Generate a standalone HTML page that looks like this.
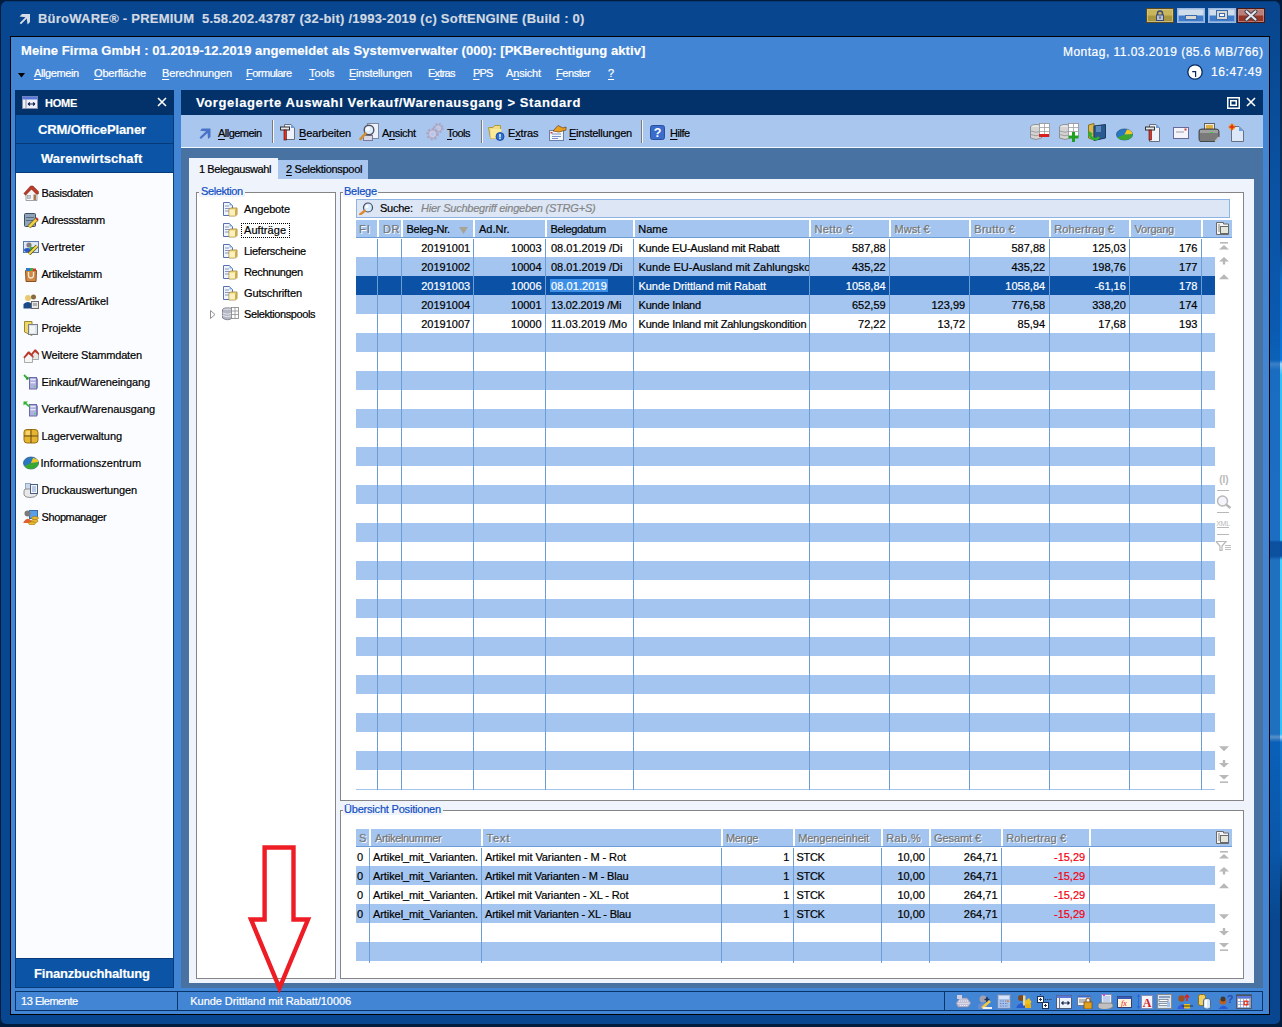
<!DOCTYPE html>
<html><head><meta charset="utf-8"><style>
html,body{margin:0;padding:0;width:1282px;height:1027px;overflow:hidden;position:relative;background:#08488f;font-family:"Liberation Sans",sans-serif;}
body>div,body>span,body>svg{position:absolute;}
u{text-decoration:underline;text-underline-offset:2px;text-decoration-thickness:1px;}
</style></head><body>
<div style="left:0px;top:0px;width:1282px;height:1027px;background:#021c3e;"></div>
<div style="left:1px;top:1px;width:1279px;height:1023px;background:#08478f;border-radius:6px 6px 5px 5px;"></div>
<div style="left:6px;top:1px;width:1270px;height:1px;background:#063a78;"></div>
<div style="left:1270px;top:20px;width:10px;height:960px;background:linear-gradient(to bottom, #08478f 0px, #0a52a4 180px, #0a5ab0 310px, #0c62b8 340px, #3a80c8 344px, #1a6cc0 350px, #1d6ec2 520px, #0c50a0 522px, #0c50a0 536px, #2070c0 540px, #2070c0 714px, #5a90c8 717px, #0a60b8 722px, #0a56a8 830px, #08478f 900px);"></div>
<div style="left:1280px;top:20px;width:2px;height:960px;background:linear-gradient(to bottom, #031f40 0px, #0a3a70 220px, #0a6cc8 260px, #0a78e0 340px, #a0d8ff 344px, #30c0f8 355px, #30c8f8 520px, #0a50a0 522px, #0a50a0 536px, #40d0ff 540px, #30c0f8 714px, #a0d8ff 717px, #1078d0 722px, #0a60b0 830px, #031f40 880px);"></div>
<div style="left:10px;top:36px;width:1260px;height:979px;box-sizing:border-box;border:1px solid #000;background:#4385d5;"></div>
<div style="left:15px;top:90px;width:159px;height:25px;background:#03326a;"></div>
<div style="left:15px;top:115px;width:159px;height:29px;background:#063a78;"></div>
<div style="left:16px;top:115px;width:157px;height:28px;background:#0c54a5;"></div>
<div style="left:15px;top:144px;width:159px;height:29px;background:#063a78;"></div>
<div style="left:16px;top:144px;width:157px;height:28px;background:#0c54a5;"></div>
<div style="left:15px;top:173px;width:159px;height:785px;background:#0a3f7c;"></div>
<div style="left:16px;top:173px;width:157px;height:785px;background:#fbfcff;"></div>
<div style="left:15px;top:958px;width:159px;height:30px;background:#063a78;"></div>
<div style="left:16px;top:959px;width:157px;height:28px;background:#0c54a5;"></div>
<div style="left:15px;top:991px;width:1248px;height:20px;box-sizing:border-box;border:1px solid #073469;background:#4385d5;"></div>
<div style="left:177px;top:992px;width:1px;height:18px;background:#073469;"></div>
<div style="left:944px;top:992px;width:1px;height:18px;background:#073469;"></div>
<div style="left:181px;top:90px;width:1082px;height:25px;background:#03326a;"></div>
<div style="left:181px;top:115px;width:1082px;height:32px;background:#a9c6ee;"></div>
<div style="left:181px;top:147px;width:1082px;height:1px;background:#f4f8fe;"></div>
<div style="left:181px;top:148px;width:1082px;height:840px;background:#4872a1;"></div>
<div style="left:278px;top:160px;width:90px;height:19px;background:#a9c6ee;"></div>
<div style="left:189px;top:158px;width:89px;height:21px;background:#eff4fc;"></div>
<div style="left:189px;top:179px;width:1065px;height:804px;background:#eff4fc;"></div>
<div style="left:196px;top:192px;width:140px;height:787px;box-sizing:border-box;border:1px solid #858585;background:#fff;"></div>
<div style="left:340px;top:192px;width:904px;height:609px;box-sizing:border-box;border:1px solid #858585;background:#fff;"></div>
<div style="left:340px;top:810px;width:904px;height:169px;box-sizing:border-box;border:1px solid #858585;background:#fff;"></div>
<div style="left:199px;top:186px;width:46px;height:11px;background:#eff4fc;"></div>
<div style="left:343px;top:186px;width:35px;height:11px;background:#eff4fc;"></div>
<div style="left:343px;top:804px;width:100px;height:11px;background:#eff4fc;"></div>
<div style="left:356px;top:199px;width:874px;height:19px;box-sizing:border-box;border:1px solid #8db2e4;background:#dce6f5;"></div>
<div style="left:356px;top:220px;width:21px;height:17px;background:#a4c5ef;"></div>
<div style="left:379px;top:220px;width:22px;height:17px;background:#a4c5ef;"></div>
<div style="left:403px;top:220px;width:70px;height:17px;background:#a4c5ef;"></div>
<div style="left:475px;top:220px;width:70px;height:17px;background:#a4c5ef;"></div>
<div style="left:547px;top:220px;width:86px;height:17px;background:#a4c5ef;"></div>
<div style="left:635px;top:220px;width:174px;height:17px;background:#a4c5ef;"></div>
<div style="left:811px;top:220px;width:78px;height:17px;background:#a4c5ef;"></div>
<div style="left:891px;top:220px;width:78px;height:17px;background:#a4c5ef;"></div>
<div style="left:971px;top:220px;width:78px;height:17px;background:#a4c5ef;"></div>
<div style="left:1051px;top:220px;width:78px;height:17px;background:#a4c5ef;"></div>
<div style="left:1131px;top:220px;width:70px;height:17px;background:#a4c5ef;"></div>
<div style="left:1203px;top:220px;width:29px;height:17px;background:#a4c5ef;"></div>
<div style="left:356px;top:237px;width:876px;height:1px;background:#6d9dd6;"></div>
<div style="left:356px;top:257px;width:859px;height:19px;background:#a4c5ef;"></div>
<div style="left:356px;top:276px;width:859px;height:19px;background:#0b51a5;"></div>
<div style="left:356px;top:295px;width:859px;height:19px;background:#a4c5ef;"></div>
<div style="left:356px;top:333px;width:859px;height:19px;background:#a4c5ef;"></div>
<div style="left:356px;top:371px;width:859px;height:19px;background:#a4c5ef;"></div>
<div style="left:356px;top:409px;width:859px;height:19px;background:#a4c5ef;"></div>
<div style="left:356px;top:447px;width:859px;height:19px;background:#a4c5ef;"></div>
<div style="left:356px;top:485px;width:859px;height:19px;background:#a4c5ef;"></div>
<div style="left:356px;top:523px;width:859px;height:19px;background:#a4c5ef;"></div>
<div style="left:356px;top:561px;width:859px;height:19px;background:#a4c5ef;"></div>
<div style="left:356px;top:599px;width:859px;height:19px;background:#a4c5ef;"></div>
<div style="left:356px;top:637px;width:859px;height:19px;background:#a4c5ef;"></div>
<div style="left:356px;top:675px;width:859px;height:19px;background:#a4c5ef;"></div>
<div style="left:356px;top:713px;width:859px;height:19px;background:#a4c5ef;"></div>
<div style="left:356px;top:751px;width:859px;height:19px;background:#a4c5ef;"></div>
<div style="left:356px;top:789px;width:859px;height:1px;background:#a4c5ef;"></div>
<div style="left:377px;top:239px;width:1px;height:551px;background:#6d9dd6;"></div>
<div style="left:401px;top:239px;width:1px;height:551px;background:#6d9dd6;"></div>
<div style="left:473px;top:239px;width:1px;height:551px;background:#6d9dd6;"></div>
<div style="left:545px;top:239px;width:1px;height:551px;background:#6d9dd6;"></div>
<div style="left:633px;top:239px;width:1px;height:551px;background:#6d9dd6;"></div>
<div style="left:809px;top:239px;width:1px;height:551px;background:#6d9dd6;"></div>
<div style="left:889px;top:239px;width:1px;height:551px;background:#6d9dd6;"></div>
<div style="left:969px;top:239px;width:1px;height:551px;background:#6d9dd6;"></div>
<div style="left:1049px;top:239px;width:1px;height:551px;background:#6d9dd6;"></div>
<div style="left:1129px;top:239px;width:1px;height:551px;background:#6d9dd6;"></div>
<div style="left:1201px;top:239px;width:1px;height:551px;background:#6d9dd6;"></div>
<div style="left:550px;top:279px;width:58px;height:13px;background:#3d8ee6;"></div>
<div style="left:356px;top:829px;width:13px;height:17px;background:#a4c5ef;"></div>
<div style="left:371px;top:829px;width:110px;height:17px;background:#a4c5ef;"></div>
<div style="left:483px;top:829px;width:238px;height:17px;background:#a4c5ef;"></div>
<div style="left:723px;top:829px;width:70px;height:17px;background:#a4c5ef;"></div>
<div style="left:795px;top:829px;width:86px;height:17px;background:#a4c5ef;"></div>
<div style="left:883px;top:829px;width:46px;height:17px;background:#a4c5ef;"></div>
<div style="left:931px;top:829px;width:70px;height:17px;background:#a4c5ef;"></div>
<div style="left:1003px;top:829px;width:86px;height:17px;background:#a4c5ef;"></div>
<div style="left:1091px;top:829px;width:141px;height:17px;background:#a4c5ef;"></div>
<div style="left:356px;top:846px;width:876px;height:1px;background:#6d9dd6;"></div>
<div style="left:356px;top:866px;width:859px;height:19px;background:#a4c5ef;"></div>
<div style="left:356px;top:904px;width:859px;height:19px;background:#a4c5ef;"></div>
<div style="left:356px;top:942px;width:859px;height:19px;background:#a4c5ef;"></div>
<div style="left:369px;top:848px;width:1px;height:115px;background:#6d9dd6;"></div>
<div style="left:481px;top:848px;width:1px;height:115px;background:#6d9dd6;"></div>
<div style="left:721px;top:848px;width:1px;height:115px;background:#6d9dd6;"></div>
<div style="left:793px;top:848px;width:1px;height:115px;background:#6d9dd6;"></div>
<div style="left:881px;top:848px;width:1px;height:115px;background:#6d9dd6;"></div>
<div style="left:929px;top:848px;width:1px;height:115px;background:#6d9dd6;"></div>
<div style="left:1001px;top:848px;width:1px;height:115px;background:#6d9dd6;"></div>
<div style="left:1089px;top:848px;width:1px;height:115px;background:#6d9dd6;"></div>
<svg style="left:19px;top:13px" width="12" height="12" viewBox="0 0 12 12"><path d="M3 1 H11 V9 L8.5 11.5 L7.8 5.5 L2 11.3 L0.7 10 L6.5 4.2 L0.5 3.5 Z" fill="#d6dce6"/></svg>
<svg style="left:1146px;top:8px" width="28" height="15" viewBox="0 0 28 15"><rect x="0.5" y="0.5" width="27" height="14" fill="#a8963f" stroke="#5d4b1c"/><rect x="1.5" y="1.5" width="25" height="6" fill="#c9b65c"/><rect x="1.5" y="1.5" width="25" height="12" fill="none" stroke="rgba(255,255,255,0.35)"/><path d="M11.5 7 V5.5 a2.5 2.5 0 0 1 5 0 V7" fill="none" stroke="#3a4a7a" stroke-width="1.5"/><rect x="10.5" y="7" width="7" height="5.5" fill="#b8c0d0" stroke="#3a4a7a"/><rect x="13.5" y="8.5" width="1" height="2" fill="#223"/></svg>
<svg style="left:1177px;top:8px" width="28" height="15" viewBox="0 0 28 15"><rect x="0.5" y="0.5" width="27" height="14" fill="#3f7bc8" stroke="#9ab8e0"/><rect x="1.5" y="1.5" width="25" height="6" fill="#cfdcea"/><rect x="1.5" y="1.5" width="25" height="12" fill="none" stroke="rgba(255,255,255,0.35)"/><rect x="8.5" y="7.5" width="11" height="4" fill="#d8d8d0" stroke="#3a6ab0" stroke-width="1"/></svg>
<svg style="left:1208px;top:8px" width="28" height="15" viewBox="0 0 28 15"><rect x="0.5" y="0.5" width="27" height="14" fill="#3f7bc8" stroke="#9ab8e0"/><rect x="1.5" y="1.5" width="25" height="6" fill="#cfdcea"/><rect x="1.5" y="1.5" width="25" height="12" fill="none" stroke="rgba(255,255,255,0.35)"/><rect x="8.5" y="2.5" width="11" height="9" fill="#d8d8d0" stroke="#3a6ab0"/><rect x="11.5" y="5.5" width="5" height="3" fill="#fff" stroke="#3a6ab0"/></svg>
<svg style="left:1237px;top:8px" width="28" height="15" viewBox="0 0 28 15"><rect x="0.5" y="0.5" width="27" height="14" fill="#983424" stroke="#4a1810"/><rect x="1.5" y="1.5" width="25" height="6" fill="#b88078"/><rect x="1.5" y="1.5" width="25" height="12" fill="none" stroke="rgba(255,255,255,0.35)"/><path d="M9.5 3.5 L18.5 11.5 M18.5 3.5 L9.5 11.5" stroke="#3a3a4a" stroke-width="4" stroke-linecap="round"/><path d="M9.5 3.5 L18.5 11.5 M18.5 3.5 L9.5 11.5" stroke="#e6e6ea" stroke-width="2.2" stroke-linecap="round"/></svg>
<svg style="left:18px;top:73px" width="7" height="5" viewBox="0 0 7 5"><path d="M0 0 H7 L3.5 4.5 Z" fill="#000"/></svg>
<svg style="left:1187px;top:64px" width="16" height="16" viewBox="0 0 16 16"><circle cx="8" cy="8" r="7.2" fill="#fff" stroke="#062a5c" stroke-width="1.3"/><path d="M5.2 7.6 H8.6 V13" fill="none" stroke="#062a5c" stroke-width="1.2"/></svg>
<svg style="left:22px;top:96px" width="16" height="13" viewBox="0 0 16 13"><rect x="0.5" y="0.5" width="15" height="12" fill="#eef0fa" stroke="#8890b0"/><rect x="0.5" y="0.5" width="15" height="3" fill="#5a78d8"/><rect x="3.5" y="3" width="1" height="10" fill="#8890b0"/><path d="M6 8 H13 M6 8 l2 -1.5 M6 8 l2 1.5 M13 8 l-2 -1.5 M13 8 l-2 1.5" stroke="#1a2a50" stroke-width="1.1" fill="none"/></svg>
<svg style="left:157px;top:97px" width="10" height="10" viewBox="0 0 10 10"><path d="M1 1 L9 9 M9 1 L1 9" stroke="#fff" stroke-width="1.6"/></svg>
<svg style="left:1227px;top:97px" width="13" height="12" viewBox="0 0 13 12"><rect x="0.75" y="0.75" width="11.5" height="10.5" fill="none" stroke="#fff" stroke-width="1.5"/><rect x="3.75" y="3.75" width="5.5" height="4.5" fill="none" stroke="#fff" stroke-width="1.5"/></svg>
<svg style="left:1246px;top:97px" width="10" height="10" viewBox="0 0 10 10"><path d="M1 1 L9 9 M9 1 L1 9" stroke="#fff" stroke-width="1.6"/></svg>
<svg style="left:23px;top:185px" width="16" height="16" viewBox="0 0 16 16"><path d="M3 8 L8.5 3.5 L14 8 V15.5 H3 Z" fill="#f6f6f6" stroke="#8a8a8a" stroke-width="0.8"/><path d="M0.8 8.5 L7.5 1 H10 L15.5 6.5 V8.8 L13.5 9.2 L8.5 4.2 L2.5 10.2 Z" fill="#bb3a2a" stroke="#7a2414" stroke-width="0.5"/><rect x="10.5" y="9.5" width="2.5" height="5.5" fill="#a87850"/><rect x="4.5" y="10.5" width="3" height="3" fill="#c0ccd8" stroke="#8a8a8a" stroke-width="0.5"/></svg>
<svg style="left:23px;top:212px" width="16" height="16" viewBox="0 0 16 16"><rect x="1.5" y="1.5" width="11" height="13" rx="1" fill="#8ea4b8" stroke="#3e4e62"/><rect x="3" y="5" width="8" height="1" fill="#5a6a80"/><rect x="3" y="8" width="8" height="1" fill="#5a6a80"/><path d="M6 15 L14 7" stroke="#6a5a20" stroke-width="4"/><path d="M6 15 L14 7" stroke="#f0d040" stroke-width="2.6"/><path d="M13 6 L15 8" stroke="#c03030" stroke-width="2"/></svg>
<svg style="left:23px;top:239px" width="16" height="16" viewBox="0 0 16 16"><rect x="0.5" y="2.5" width="15" height="11" fill="#dfe8f4" stroke="#5a7aa8"/><circle cx="6" cy="6" r="2.6" fill="#808080"/><ellipse cx="4.5" cy="11" rx="3.5" ry="2" fill="#2a5ac8"/><rect x="7" y="8" width="4" height="3" fill="#3ab03a"/><path d="M6 15 L14 7" stroke="#5a5020" stroke-width="3.6"/><path d="M6 15 L14 7" stroke="#f0d848" stroke-width="2.2"/></svg>
<svg style="left:23px;top:266px" width="16" height="16" viewBox="0 0 16 16"><path d="M2.5 4.5 H13.5 L13 15.5 H3 Z" fill="#cf8845" stroke="#8a5020"/><rect x="3" y="2" width="4" height="3" fill="#2a7ad0"/><rect x="7" y="2" width="3" height="3" fill="#3ab040"/><rect x="10" y="2.5" width="3" height="2.5" fill="#d83030"/><path d="M5.5 6 V9.5 a2.5 2.5 0 0 0 5 0 V6" fill="none" stroke="#f4e8d8" stroke-width="1.3"/></svg>
<svg style="left:23px;top:293px" width="16" height="16" viewBox="0 0 16 16"><circle cx="5" cy="5" r="3" fill="#e8c870"/><path d="M0.5 15.5 V11 Q5 7 9 11 V15.5 Z" fill="#1a4a88"/><circle cx="10.5" cy="4" r="2.5" fill="#8a6a40"/><rect x="8.5" y="8.5" width="7" height="7" fill="#e8e8e8" stroke="#6a6a6a"/><rect x="10" y="10" width="4" height="3" fill="#b0b0b0"/></svg>
<svg style="left:23px;top:320px" width="16" height="16" viewBox="0 0 16 16"><path d="M1.5 1.5 H9 V15.5 L1.5 12 Z" fill="#f0d868" stroke="#9a8a30"/><rect x="5.5" y="4.5" width="9" height="10" fill="#dde2e8" stroke="#7a8088"/><rect x="7" y="6" width="5" height="7" fill="#f2f4f6"/></svg>
<svg style="left:23px;top:347px" width="16" height="16" viewBox="0 0 16 16"><path d="M8.5 7 L12 4 L15.5 7 V12.5 H8.5 Z" fill="#e8e8e8" stroke="#8a8a8a" stroke-width="0.7"/><path d="M7.8 7.2 L11.5 2.5 H13 L16 6 V8 L12 5 L9 8.5 Z" fill="#bb3a2a"/><path d="M1.5 10 L5.5 6.5 L9.5 10 V15.5 H1.5 Z" fill="#f4f4f4" stroke="#8a8a8a" stroke-width="0.7"/><path d="M0.3 10.3 L5 4.5 H6.5 L10.5 9 V11 L5.8 7 L1.5 11.5 Z" fill="#bb3a2a"/></svg>
<svg style="left:23px;top:374px" width="16" height="16" viewBox="0 0 16 16"><rect x="6.5" y="3.5" width="7" height="11.5" fill="#aeb0e0" stroke="#6a6aa8"/><rect x="13.5" y="4.5" width="1.5" height="10" fill="#8a8ac0"/><rect x="7.5" y="5" width="5" height="1.3" fill="#e8e8f8"/><rect x="7.5" y="8" width="5" height="1.3" fill="#e8e8f8"/><rect x="11" y="12" width="1.2" height="1.2" fill="#40e040"/><path d="M1 1 L5 5" stroke="#30b030" stroke-width="1.8"/><path d="M2.5 5.5 H5.5 V2.5 Z" fill="#208820"/></svg>
<svg style="left:23px;top:401px" width="16" height="16" viewBox="0 0 16 16"><rect x="6.5" y="3.5" width="7" height="11.5" fill="#aeb0e0" stroke="#6a6aa8"/><rect x="13.5" y="4.5" width="1.5" height="10" fill="#8a8ac0"/><rect x="7.5" y="5" width="5" height="1.3" fill="#e8e8f8"/><rect x="7.5" y="8" width="5" height="1.3" fill="#e8e8f8"/><rect x="11" y="12" width="1.2" height="1.2" fill="#40e040"/><path d="M2 2 L6.5 5.5" stroke="#40c040" stroke-width="1.8"/><path d="M0.5 0.5 H5 L0.5 4.5 Z" fill="#30b030"/></svg>
<svg style="left:23px;top:428px" width="16" height="16" viewBox="0 0 16 16"><path d="M1 4 Q1 1.5 4 1.5 H12 Q15 1.5 15 4.5 V12 Q15 15 12 15 H4 Q1 15 1 12 Z" fill="#e4b432" stroke="#9a7010"/><path d="M1 8 H15 M8 1.5 V15" stroke="#5a4010" stroke-width="0.9"/><path d="M3 3 H7 V7 H3Z" fill="#f4d470"/></svg>
<svg style="left:23px;top:455px" width="16" height="16" viewBox="0 0 16 16"><ellipse cx="8" cy="8" rx="7.5" ry="6" fill="#2a78c0" stroke="#1a4a80" stroke-width="0.7"/><path d="M8 8 L15.5 7 Q15.5 13.5 8 14 Q2.5 14 1.5 11 Z" fill="#3aa830"/><path d="M8 8 L10 3 Q15 3.5 15.5 7 Z" fill="#f0c820"/></svg>
<svg style="left:23px;top:482px" width="16" height="16" viewBox="0 0 16 16"><rect x="2.5" y="1.5" width="5" height="6" fill="#c8d8f0" stroke="#8a9ab0" stroke-width="0.8"/><path d="M1 9 Q1 7 3 7 H12 Q14 7 14 9 V13 Q12 15.5 7 15.5 Q2 15.5 1 13 Z" fill="#e8e8e8" stroke="#7a7a7a" stroke-width="0.8"/><rect x="7.5" y="2.5" width="7" height="9" fill="#f4f6fa" stroke="#4a6080"/><path d="M9 5 H13 M9 7 H13 M9 9 H13" stroke="#6a88c0" stroke-width="0.8"/></svg>
<svg style="left:23px;top:509px" width="16" height="16" viewBox="0 0 16 16"><rect x="6.5" y="1.5" width="8" height="8" fill="#5aa0e8" stroke="#3a6ab0"/><circle cx="4.5" cy="4.5" r="3" fill="#7a7a7a"/><path d="M0.5 13 Q4.5 7 8.5 12 V14 H0.5Z" fill="#e06030"/><ellipse cx="12" cy="9" rx="3.5" ry="1.6" fill="#e8b830" stroke="#a07810" stroke-width="0.6"/><ellipse cx="11.5" cy="12" rx="3.5" ry="1.6" fill="#e8b830" stroke="#a07810" stroke-width="0.6"/><ellipse cx="9" cy="14.3" rx="3.5" ry="1.6" fill="#e8b830" stroke="#a07810" stroke-width="0.6"/></svg>
<svg style="left:199px;top:128px" width="12" height="11" viewBox="0 0 12 11"><path d="M3 0.5 H11.5 V9 L9 11 L8.5 5 L2 11 L0.5 9.5 L7 3.3 L1 2.8 Z" fill="#4a72c8"/></svg>
<div style="left:272px;top:120px;width:1px;height:23px;background:#7a7a7a;"></div>
<div style="left:273px;top:120px;width:1px;height:23px;background:#f4f6fa;"></div>
<div style="left:481px;top:120px;width:1px;height:23px;background:#7a7a7a;"></div>
<div style="left:482px;top:120px;width:1px;height:23px;background:#f4f6fa;"></div>
<div style="left:641px;top:120px;width:1px;height:23px;background:#7a7a7a;"></div>
<div style="left:642px;top:120px;width:1px;height:23px;background:#f4f6fa;"></div>
<svg style="left:280px;top:124px" width="15" height="17" viewBox="0 0 15 17"><path d="M4.5 0.5 H11 L14.5 4 V15.5 H4.5 Z" fill="#eef2fa" stroke="#6a7080"/><path d="M11 0.5 V4 H14.5" fill="#6aa0e0"/><rect x="0.5" y="3" width="9" height="3" fill="#e8e8e8" stroke="#303030"/><rect x="4" y="6" width="2.4" height="10" fill="#e83020" stroke="#401010" stroke-width="0.6"/></svg>
<svg style="left:359px;top:123px" width="21" height="18" viewBox="0 0 21 18"><rect x="8.5" y="0.5" width="11" height="15" fill="#eef2fa" stroke="#7a8aa0"/><rect x="4.5" y="12.5" width="9" height="5" fill="#d8d8e8" stroke="#7a7a9a"/><circle cx="10" cy="7" r="4.8" fill="#dfeeff" stroke="#505060" stroke-width="1.4"/><circle cx="9" cy="6" r="2" fill="#fff"/><path d="M6.5 10.5 L1.5 16" stroke="#d09030" stroke-width="2.6" stroke-linecap="round"/></svg>
<svg style="left:426px;top:123px" width="18" height="18" viewBox="0 0 18 18"><circle cx="12.3" cy="5.2" r="4.2" fill="#bdbdd8" stroke="#a8a8c8" stroke-width="2.4" stroke-dasharray="1.9 1.4"/><circle cx="12.3" cy="5.2" r="3.3" fill="#c8c8e2" stroke="#9090b0" stroke-width="0.5"/><circle cx="12.3" cy="5.2" r="1.2" fill="#a9c6ee"/><circle cx="6.5" cy="11" r="5" fill="#bdbdd8" stroke="#a8a8c8" stroke-width="2.6" stroke-dasharray="2.1 1.6"/><circle cx="6.5" cy="11" r="4" fill="#cacae4" stroke="#9090b0" stroke-width="0.5"/><circle cx="6.5" cy="11" r="1.5" fill="#a9c6ee"/></svg>
<svg style="left:488px;top:124px" width="17" height="17" viewBox="0 0 17 17"><path d="M0.5 3.5 H5 L6.5 1.5 H12.5 V14.5 H2.5 Z" fill="#f2dc80" stroke="#b09a40"/><path d="M3 5 H13.5 L12.5 14.5 H2.5 Z" fill="#f8ea9a"/><circle cx="12" cy="12.5" r="4" fill="#2a70d8" stroke="#104090" stroke-width="0.8"/><rect x="11.3" y="10" width="1.4" height="3.5" fill="#fff"/><rect x="11.3" y="14" width="1.4" height="1.2" fill="#fff"/></svg>
<svg style="left:549px;top:124px" width="18" height="17" viewBox="0 0 18 17"><rect x="0.5" y="6.5" width="14" height="10" fill="#f4f6fa" stroke="#6a80a8"/><path d="M3 10 H12 M3 12.5 H12 M3 14.5 H9" stroke="#6a88c0" stroke-width="0.9"/><rect x="1.5" y="8" width="2" height="1.5" fill="#d04040"/><path d="M4 7 L9 1.5 L14 4 L17 3 L17 6 L10 8Z" fill="#e8a020" stroke="#704010" stroke-width="0.7"/></svg>
<svg style="left:650px;top:125px" width="15" height="15" viewBox="0 0 15 15"><rect x="0.5" y="0.5" width="14" height="14" rx="2" fill="#3a6ccc" stroke="#2a50a0"/><text x="7.5" y="12.3" font-family="Liberation Sans" font-weight="bold" font-size="12.5" fill="#fff" text-anchor="middle">?</text></svg>
<svg style="left:1030px;top:123px" width="21" height="19" viewBox="0 0 21 19"><ellipse cx="6" cy="4" rx="5.5" ry="2.5" fill="#e8e8e8" stroke="#808080" stroke-width="0.8"/><path d="M0.5 4 V15 Q6 18 11.5 15 V4" fill="#d4d4d4" stroke="#808080" stroke-width="0.8"/><path d="M0.5 8 Q6 10.5 11.5 8 M0.5 11.5 Q6 14 11.5 11.5" fill="none" stroke="#909090" stroke-width="0.8"/><rect x="9.5" y="0.5" width="10" height="13" fill="#fff" stroke="#909090" stroke-width="0.8"/><path d="M9.5 4.5 H19.5 M9.5 8.5 H19.5 M14.5 0.5 V13.5" stroke="#a0a0a0" stroke-width="0.8"/><rect x="9" y="11" width="10" height="3" fill="#d82020"/></svg>
<svg style="left:1059px;top:123px" width="21" height="19" viewBox="0 0 21 19"><ellipse cx="6" cy="4" rx="5.5" ry="2.5" fill="#e8e8e8" stroke="#808080" stroke-width="0.8"/><path d="M0.5 4 V15 Q6 18 11.5 15 V4" fill="#d4d4d4" stroke="#808080" stroke-width="0.8"/><path d="M0.5 8 Q6 10.5 11.5 8 M0.5 11.5 Q6 14 11.5 11.5" fill="none" stroke="#909090" stroke-width="0.8"/><rect x="9.5" y="0.5" width="10" height="13" fill="#fff" stroke="#909090" stroke-width="0.8"/><path d="M9.5 4.5 H19.5 M9.5 8.5 H19.5 M14.5 0.5 V13.5" stroke="#a0a0a0" stroke-width="0.8"/><path d="M14.5 9 V19 M9.5 14 H19.5" stroke="#20a020" stroke-width="3"/></svg>
<svg style="left:1087px;top:123px" width="20" height="19" viewBox="0 0 20 19"><path d="M1.5 2 L7 0.5 V17 L1.5 15 Z" fill="#d8b850" stroke="#8a7020"/><path d="M7 3 L18.5 1.5 V15 L7 17.5 Z" fill="#2a5a90" stroke="#1a3a60"/><rect x="9" y="3" width="5" height="6" fill="#5a8ac0"/><path d="M3 11 A5 5 0 0 0 12 14" fill="none" stroke="#30b030" stroke-width="2.6"/><path d="M2 8 L6 11 L1 13Z" fill="#30b030"/></svg>
<svg style="left:1116px;top:128px" width="17" height="13" viewBox="0 0 17 13"><ellipse cx="8.5" cy="6.5" rx="8" ry="5.5" fill="#2a78c0" stroke="#1a4a80" stroke-width="0.7"/><path d="M8.5 6.5 L16.5 6 Q16 12 8.5 12 Q3 12 1.5 9.5 Z" fill="#3aa830"/><path d="M8.5 6.5 L11 1.5 Q16 2 16.5 6 Z" fill="#f0c820"/></svg>
<svg style="left:1145px;top:124px" width="15" height="18" viewBox="0 0 15 18"><path d="M4.5 0.5 H11 L14.5 4 V17.5 H4.5 Z" fill="#eef2fa" stroke="#6a7080"/><path d="M11 0.5 V4 H14.5" fill="#6aa0e0"/><rect x="0.5" y="3" width="9" height="3" fill="#e8e8e8" stroke="#303030"/><rect x="4" y="6" width="2.4" height="10" fill="#e83020" stroke="#401010" stroke-width="0.6"/></svg>
<svg style="left:1173px;top:127px" width="16" height="12" viewBox="0 0 16 12"><rect x="0.5" y="0.5" width="15" height="11" fill="#f4f4fa" stroke="#6a6a9a"/><rect x="3" y="4" width="8" height="2" fill="#c8c8d0"/><rect x="11.5" y="1.5" width="2" height="2" fill="#d04040"/></svg>
<svg style="left:1198px;top:123px" width="22" height="19" viewBox="0 0 22 19"><rect x="6.5" y="0.5" width="10" height="8" fill="#e8e8e8" stroke="#606060"/><rect x="8" y="2" width="7" height="5" fill="#e0b040"/><path d="M1 8 Q1 6 4 6 H18 Q21 6 21 8.5 V14 L17 18.5 H2 Q1 18 1 15 Z" fill="#7a7a7a" stroke="#303030" stroke-width="0.8"/><rect x="2" y="7" width="18" height="3" fill="#a0a0a0"/><rect x="12" y="9" width="3" height="1" fill="#40d040"/><path d="M17 18.5 L21 14" stroke="#c0c0c0" stroke-width="1.5"/></svg>
<svg style="left:1228px;top:123px" width="16" height="19" viewBox="0 0 16 19"><path d="M3.5 3.5 H11 L15.5 8 V18.5 H3.5 Z" fill="#dce8f8" stroke="#6a7080"/><path d="M11 3.5 V8 H15.5Z" fill="#6aa0e0"/><circle cx="4" cy="4" r="3" fill="#f0a020"/><path d="M4 0 L5 3 L8 4 L5 5 L4 8 L3 5 L0 4 L3 3 Z" fill="#e83010"/></svg>
<svg style="left:223px;top:202px" width="15" height="15" viewBox="0 0 15 15"><path d="M0.5 0.5 H6.5 L9.5 3.5 V13.5 H0.5 Z" fill="#f0f4fc" stroke="#5a70b0"/><path d="M2 4 H6 M2 6.5 H7 M2 9 H6" stroke="#7a8ab8" stroke-width="0.9"/><path d="M6.5 0.5 V3.5 H9.5" fill="#88b0e8"/><path d="M6 7.5 L7.5 6 H14 V12.5 L12.5 14 H6 Z" fill="#f4de8a" stroke="#9a8030" stroke-width="0.8"/><rect x="6.4" y="7.9" width="5.8" height="5.6" fill="#fbf0c0"/><path d="M12.2 7.9 L13.6 6.5 V12.4 L12.2 13.6Z" fill="#c8a030"/></svg>
<svg style="left:223px;top:223px" width="15" height="15" viewBox="0 0 15 15"><path d="M0.5 0.5 H6.5 L9.5 3.5 V13.5 H0.5 Z" fill="#f0f4fc" stroke="#5a70b0"/><path d="M2 4 H6 M2 6.5 H7 M2 9 H6" stroke="#7a8ab8" stroke-width="0.9"/><path d="M6.5 0.5 V3.5 H9.5" fill="#88b0e8"/><path d="M6 7.5 L7.5 6 H14 V12.5 L12.5 14 H6 Z" fill="#f4de8a" stroke="#9a8030" stroke-width="0.8"/><rect x="6.4" y="7.9" width="5.8" height="5.6" fill="#fbf0c0"/><path d="M12.2 7.9 L13.6 6.5 V12.4 L12.2 13.6Z" fill="#c8a030"/></svg>
<svg style="left:223px;top:244px" width="15" height="15" viewBox="0 0 15 15"><path d="M0.5 0.5 H6.5 L9.5 3.5 V13.5 H0.5 Z" fill="#f0f4fc" stroke="#5a70b0"/><path d="M2 4 H6 M2 6.5 H7 M2 9 H6" stroke="#7a8ab8" stroke-width="0.9"/><path d="M6.5 0.5 V3.5 H9.5" fill="#88b0e8"/><path d="M6 7.5 L7.5 6 H14 V12.5 L12.5 14 H6 Z" fill="#f4de8a" stroke="#9a8030" stroke-width="0.8"/><rect x="6.4" y="7.9" width="5.8" height="5.6" fill="#fbf0c0"/><path d="M12.2 7.9 L13.6 6.5 V12.4 L12.2 13.6Z" fill="#c8a030"/></svg>
<svg style="left:223px;top:265px" width="15" height="15" viewBox="0 0 15 15"><path d="M0.5 0.5 H6.5 L9.5 3.5 V13.5 H0.5 Z" fill="#f0f4fc" stroke="#5a70b0"/><path d="M2 4 H6 M2 6.5 H7 M2 9 H6" stroke="#7a8ab8" stroke-width="0.9"/><path d="M6.5 0.5 V3.5 H9.5" fill="#88b0e8"/><path d="M6 7.5 L7.5 6 H14 V12.5 L12.5 14 H6 Z" fill="#f4de8a" stroke="#9a8030" stroke-width="0.8"/><rect x="6.4" y="7.9" width="5.8" height="5.6" fill="#fbf0c0"/><path d="M12.2 7.9 L13.6 6.5 V12.4 L12.2 13.6Z" fill="#c8a030"/></svg>
<svg style="left:223px;top:286px" width="15" height="15" viewBox="0 0 15 15"><path d="M0.5 0.5 H6.5 L9.5 3.5 V13.5 H0.5 Z" fill="#f0f4fc" stroke="#5a70b0"/><path d="M2 4 H6 M2 6.5 H7 M2 9 H6" stroke="#7a8ab8" stroke-width="0.9"/><path d="M6.5 0.5 V3.5 H9.5" fill="#88b0e8"/><path d="M6 7.5 L7.5 6 H14 V12.5 L12.5 14 H6 Z" fill="#f4de8a" stroke="#9a8030" stroke-width="0.8"/><rect x="6.4" y="7.9" width="5.8" height="5.6" fill="#fbf0c0"/><path d="M12.2 7.9 L13.6 6.5 V12.4 L12.2 13.6Z" fill="#c8a030"/></svg>
<svg style="left:222px;top:307px" width="17" height="14" viewBox="0 0 17 14"><ellipse cx="5.5" cy="3" rx="5" ry="2.2" fill="#d0d4dc" stroke="#707480" stroke-width="0.8"/><path d="M0.5 3 V11 Q5.5 14.5 10.5 11 V3" fill="#b4b8c4" stroke="#707480" stroke-width="0.8"/><path d="M0.5 6 Q5.5 8.5 10.5 6 M0.5 8.5 Q5.5 11 10.5 8.5" fill="none" stroke="#f0f0f0" stroke-width="0.8"/><rect x="9.5" y="0.5" width="7" height="11" fill="#fff" stroke="#808080" stroke-width="0.8"/><path d="M9.5 4 H16.5 M9.5 7.5 H16.5 M13 0.5 V11.5" stroke="#909090" stroke-width="0.8"/></svg>
<svg style="left:210px;top:310px" width="6" height="9" viewBox="0 0 6 9"><path d="M0.5 0.5 L5 4.5 L0.5 8.5 Z" fill="none" stroke="#909090"/></svg>
<div style="left:241px;top:223px;width:49px;height:15px;box-sizing:border-box;border:1px dotted #000;background:transparent;"></div>
<svg style="left:359px;top:202px" width="15" height="13" viewBox="0 0 15 13"><circle cx="9" cy="5.5" r="4.5" fill="#d8ecff" stroke="#404a60" stroke-width="1.2"/><circle cx="8" cy="4.5" r="1.6" fill="#fff"/><path d="M5.8 8.7 L1.2 12.5" stroke="#e08830" stroke-width="2.4" stroke-linecap="round"/></svg>
<svg style="left:459px;top:227px" width="9" height="7" viewBox="0 0 9 7"><path d="M0 0 H9 L4.5 7Z" fill="#a8a494"/></svg>
<svg style="left:1216px;top:222px" width="13" height="13" viewBox="0 0 13 13"><path d="M0.5 0.5 H7.5 V2 H12.5 V12.5 H0.5 Z" fill="#f4f4f4" stroke="#6a6a6a"/><rect x="4.5" y="4.5" width="8" height="7" fill="#e4e8dc" stroke="#6a6a6a"/><path d="M2 3 H4 M2 5 H4 M2 7 H4 M2 9 H4" stroke="#6a6a6a" stroke-width="0.8"/></svg>
<svg style="left:1216px;top:831px" width="13" height="13" viewBox="0 0 13 13"><path d="M0.5 0.5 H7.5 V2 H12.5 V12.5 H0.5 Z" fill="#f4f4f4" stroke="#6a6a6a"/><rect x="4.5" y="4.5" width="8" height="7" fill="#e4e8dc" stroke="#6a6a6a"/><path d="M2 3 H4 M2 5 H4 M2 7 H4 M2 9 H4" stroke="#6a6a6a" stroke-width="0.8"/></svg>
<svg style="left:1219px;top:242px" width="10" height="9" viewBox="0 0 10 9"><rect x="1" y="0" width="8" height="1.6" fill="#b8b8b8"/><path d="M0 7.5 L5 3 L10 7.5Z" fill="#b8b8b8"/></svg>
<svg style="left:1219px;top:257px" width="10" height="8" viewBox="0 0 10 8"><path d="M0 4.5 L5 0 L10 4.5Z" fill="#b8b8b8"/><rect x="3.8" y="4" width="2.4" height="3.5" fill="#b8b8b8"/></svg>
<svg style="left:1219px;top:274px" width="10" height="6" viewBox="0 0 10 6"><path d="M0 5.3 L5 0.3 L10 5.3Z" fill="#b8b8b8"/></svg>
<svg style="left:1219px;top:746px" width="10" height="6" viewBox="0 0 10 6"><path d="M0 0.3 L5 5.3 L10 0.3Z" fill="#b8b8b8"/></svg>
<svg style="left:1219px;top:760px" width="10" height="8" viewBox="0 0 10 8"><path d="M0 3 L5 7.5 L10 3Z" fill="#b8b8b8"/><rect x="3.8" y="0" width="2.4" height="3.5" fill="#b8b8b8"/></svg>
<svg style="left:1219px;top:775px" width="10" height="9" viewBox="0 0 10 9"><path d="M0 0 L5 4.5 L10 0Z" fill="#b8b8b8"/><rect x="1" y="6.4" width="8" height="1.6" fill="#b8b8b8"/></svg>
<svg style="left:1219px;top:851px" width="10" height="9" viewBox="0 0 10 9"><rect x="1" y="0" width="8" height="1.6" fill="#b8b8b8"/><path d="M0 7.5 L5 3 L10 7.5Z" fill="#b8b8b8"/></svg>
<svg style="left:1219px;top:867px" width="10" height="8" viewBox="0 0 10 8"><path d="M0 4.5 L5 0 L10 4.5Z" fill="#b8b8b8"/><rect x="3.8" y="4" width="2.4" height="3.5" fill="#b8b8b8"/></svg>
<svg style="left:1219px;top:883px" width="10" height="6" viewBox="0 0 10 6"><path d="M0 5.3 L5 0.3 L10 5.3Z" fill="#b8b8b8"/></svg>
<svg style="left:1219px;top:914px" width="10" height="6" viewBox="0 0 10 6"><path d="M0 0.3 L5 5.3 L10 0.3Z" fill="#b8b8b8"/></svg>
<svg style="left:1219px;top:928px" width="10" height="8" viewBox="0 0 10 8"><path d="M0 3 L5 7.5 L10 3Z" fill="#b8b8b8"/><rect x="3.8" y="0" width="2.4" height="3.5" fill="#b8b8b8"/></svg>
<svg style="left:1219px;top:943px" width="10" height="9" viewBox="0 0 10 9"><path d="M0 0 L5 4.5 L10 0Z" fill="#b8b8b8"/><rect x="1" y="6.4" width="8" height="1.6" fill="#b8b8b8"/></svg>
<svg style="left:1216px;top:474px" width="16" height="80" viewBox="0 0 16 80"><text x="8" y="9" font-family="Liberation Sans" font-size="10" font-weight="bold" fill="#b8b8b8" text-anchor="middle">(I)</text>
<rect x="1" y="16" width="12" height="1" fill="#b8b8b8"/>
<circle cx="6.5" cy="27" r="5" fill="#f4f4fc" stroke="#b8b8b8" stroke-width="1.4"/><path d="M10 30.5 L14.5 34" stroke="#b8b8b8" stroke-width="2.4"/>
<rect x="1" y="38" width="12" height="1" fill="#b8b8b8"/>
<text x="7" y="52" font-family="Liberation Sans" font-size="7" fill="#b8b8b8" text-anchor="middle" letter-spacing="-0.3">XML</text>
<rect x="1" y="53" width="12" height="1" fill="#b8b8b8"/>
<rect x="1" y="60" width="12" height="1" fill="#b8b8b8"/>
<path d="M0 67.5 H10 L6 72 V76.5 H4 V72 Z" fill="none" stroke="#b8b8b8" stroke-width="1.2"/><path d="M9 71.5 H15 M9 73.5 H15 M9 75.5 H15" stroke="#b8b8b8" stroke-width="0.9"/></svg>
<svg style="left:955px;top:994px" width="16" height="15" viewBox="0 0 16 15"><path d="M1 9 L5 4 H12 L16 9 L13 13 H3Z" fill="#c0c0d8" stroke="#8a8aa0" stroke-width="0.7"/><path d="M4 7 H13 M3.5 9.5 H14 M5 11.5 H12" stroke="#fff" stroke-width="0.8" stroke-dasharray="1 1"/><rect x="2" y="1" width="5" height="4" fill="#d0d0e0"/></svg>
<svg style="left:977px;top:994px" width="16" height="15" viewBox="0 0 16 15"><circle cx="6" cy="5" r="3.5" fill="#a0a0b0"/><path d="M1 15 V11 Q6 6 10 11 V15Z" fill="#6a8ad0"/><path d="M10 3 V8 M7.5 5.5 H12.5" stroke="#203050" stroke-width="1.6"/><path d="M5 14 L13 7" stroke="#f0c840" stroke-width="2.6"/><rect x="6" y="13" width="9" height="2" fill="#f0f0f0"/></svg>
<svg style="left:997px;top:994px" width="16" height="15" viewBox="0 0 16 15"><rect x="0.5" y="0.5" width="13" height="14" fill="#a8c0e8" stroke="#6a88b8"/><rect x="2" y="2" width="10" height="3" fill="#d8e4f8"/><path d="M3 7 H11 M3 9.5 H11 M3 12 H11" stroke="#6a88c8" stroke-width="1" stroke-dasharray="1.5 1"/><rect x="10" y="6.5" width="2" height="1.5" fill="#e08030"/></svg>
<svg style="left:1016px;top:994px" width="16" height="15" viewBox="0 0 16 15"><circle cx="5" cy="4" r="3" fill="#7a4a20"/><path d="M0.5 13 Q5 6 9 12 V14 H0.5Z" fill="#2a5ad0"/><rect x="7" y="1.5" width="2.5" height="10" fill="#e8d8a0"/><path d="M9 7 L13 4 L15.5 8 L13 12 L9 10Z" fill="#f0c020"/><rect x="9" y="10" width="6" height="4" fill="#e8b010"/></svg>
<svg style="left:1037px;top:994px" width="16" height="15" viewBox="0 0 16 15"><rect x="0.5" y="2.5" width="6" height="6" fill="#fff" stroke="#203050"/><path d="M2 5.5 H5 M3.5 4 V7" stroke="#203050"/><rect x="5.5" y="8.5" width="6" height="6" fill="#fff" stroke="#203050"/><path d="M7 11.5 H10 M8.5 10 V13" stroke="#203050"/><path d="M8 5.5 H15" stroke="#203050" stroke-dasharray="1 1.2"/><rect x="3" y="0" width="1" height="1" fill="#203050"/></svg>
<svg style="left:1056px;top:994px" width="16" height="15" viewBox="0 0 16 15"><rect x="0.5" y="1.5" width="15" height="13" fill="#f0f2fa" stroke="#505a78"/><rect x="0.5" y="1.5" width="15" height="2.5" fill="#5a78d8"/><rect x="3" y="3" width="1" height="11" fill="#707890"/><path d="M5.5 9 H13.5 M5.5 9 l2 -1.5 M5.5 9 l2 1.5 M13.5 9 l-2 -1.5 M13.5 9 l-2 1.5" stroke="#1a2a50" stroke-width="1.1" fill="none"/></svg>
<svg style="left:1077px;top:994px" width="16" height="15" viewBox="0 0 16 15"><rect x="0.5" y="1.5" width="13" height="10" fill="#f0f0f0" stroke="#707890"/><rect x="0.5" y="1.5" width="13" height="2" fill="#3a6ad0"/><path d="M2 6 H9 M2 8 H8" stroke="#808080"/><rect x="7" y="8" width="8" height="7" fill="#e0a020" stroke="#805010" stroke-width="0.8"/><path d="M9 8 V6 a2 2 0 0 1 4 0 V8" fill="none" stroke="#805010"/></svg>
<svg style="left:1097px;top:994px" width="16" height="15" viewBox="0 0 16 15"><rect x="4.5" y="0.5" width="10" height="10" fill="#e8eefa" stroke="#8090b0"/><path d="M6 3 H13 M6 5 H13 M6 7 H13" stroke="#8aa0d0" stroke-width="0.8"/><path d="M1 11 Q1 9 3 9 H14 Q16 9 16 11 V13 Q13 15.5 8 15.5 Q2 15.5 1 13Z" fill="#c0c0c0" stroke="#707070" stroke-width="0.8"/><rect x="6" y="0" width="2" height="2" fill="#e040e0"/></svg>
<svg style="left:1117px;top:994px" width="16" height="15" viewBox="0 0 16 15"><rect x="0.5" y="2.5" width="14" height="11" fill="#fff4dc" stroke="#304070"/><rect x="0.5" y="2.5" width="14" height="2.5" fill="#3a5ab8"/><text x="7" y="12" font-family="Liberation Serif" font-style="italic" font-size="8" fill="#e02020" text-anchor="middle">fx</text></svg>
<svg style="left:1137px;top:994px" width="16" height="15" viewBox="0 0 16 15"><path d="M1.5 1 V14 M0 3 L1.5 0.5 L3 3 M0 12 L1.5 14.5 L3 12" stroke="#2a6ad8" stroke-width="1" fill="#2a6ad8"/><rect x="4.5" y="1.5" width="11" height="13" fill="#f4f4fa" stroke="#8a90b0"/><text x="10" y="12.5" font-family="Liberation Serif" font-weight="bold" font-size="12" fill="#d02020" text-anchor="middle">A</text></svg>
<svg style="left:1157px;top:994px" width="16" height="15" viewBox="0 0 16 15"><rect x="0.5" y="0.5" width="14" height="14" fill="#d8e4f0" stroke="#8a8a8a"/><rect x="2" y="2" width="11" height="2" fill="#8aa0c0"/><rect x="2" y="5.5" width="9" height="2" fill="#fff" stroke="#505a70" stroke-width="0.6"/><rect x="2" y="9.5" width="9" height="2" fill="#fff" stroke="#505a70" stroke-width="0.6"/><rect x="10" y="8" width="3" height="5" fill="#a0c0e8"/></svg>
<svg style="left:1177px;top:994px" width="16" height="15" viewBox="0 0 16 15"><circle cx="4.5" cy="4.5" r="3.2" fill="#a05020"/><path d="M0.5 14 Q4.5 7 8.5 13 V15 H0.5Z" fill="#3a5ad8"/><path d="M10 1.5 V7 M8 3.5 L10 1 L12 3.5" stroke="#e02020" stroke-width="1.4" fill="none"/><rect x="7" y="10" width="6" height="4.5" fill="#e8c020"/><path d="M5 12 H16" stroke="#202020" stroke-width="0.8"/></svg>
<svg style="left:1198px;top:994px" width="16" height="15" viewBox="0 0 16 15"><rect x="0.5" y="0.5" width="7" height="11" rx="2" fill="#f0d060" stroke="#8a7020"/><rect x="5.5" y="4.5" width="7" height="10.5" rx="2.5" fill="#d8e8f8" stroke="#4a6a90"/><rect x="7" y="6" width="2" height="7" fill="#fff"/></svg>
<svg style="left:1218px;top:994px" width="16" height="15" viewBox="0 0 16 15"><circle cx="5" cy="7" r="3.5" fill="#c06020"/><circle cx="5" cy="5" r="2.5" fill="#3a3a3a"/><path d="M0.5 15 Q5 9 9.5 14 V15Z" fill="#2a5ad8"/><text x="12" y="9" font-family="Liberation Sans" font-weight="bold" font-size="11" fill="#2a4ab8" text-anchor="middle">?</text></svg>
<svg style="left:1236px;top:994px" width="16" height="15" viewBox="0 0 16 15"><rect x="0.5" y="1.5" width="15" height="13" fill="#8aa0d0" stroke="#505868"/><path d="M0.5 0.8 H15.5" stroke="#404040" stroke-width="1.4" stroke-dasharray="1 1"/><rect x="1" y="2" width="14" height="2" fill="#5a7ae0"/><rect x="2" y="5" width="2.2" height="2.2" fill="#fff"/><rect x="5" y="5" width="2.2" height="2.2" fill="#fff"/><rect x="8" y="5" width="2.2" height="2.2" fill="#fff"/><rect x="11" y="5" width="2.2" height="2.2" fill="#fff"/><rect x="2" y="8" width="2.2" height="2.2" fill="#fff"/><rect x="5" y="8" width="2.2" height="2.2" fill="#fff"/><rect x="8" y="8" width="2.2" height="2.2" fill="#fff"/><rect x="11" y="8" width="2.2" height="2.2" fill="#fff"/><rect x="2" y="11" width="2.2" height="2.2" fill="#fff"/><rect x="5" y="11" width="2.2" height="2.2" fill="#fff"/><rect x="8" y="11" width="2.2" height="2.2" fill="#fff"/><rect x="11" y="11" width="2.2" height="2.2" fill="#fff"/><rect x="8.2" y="7.2" width="3.6" height="3.6" fill="none" stroke="#f03010" stroke-width="1.3"/></svg>
<svg style="left:240px;top:840px" width="80" height="160" viewBox="0 0 80 160"><path d="M24.6 7.5 H53.5 V79.5 H68 L39.5 148 L11 79.5 H24.6 Z" fill="none" stroke="#ee1c24" stroke-width="4.4" stroke-linejoin="miter" stroke-miterlimit="10"/></svg>
<span style="left:38.00px;top:12.02px;font:bold 13px 'Liberation Sans';line-height:14.95px;color:#d2d9e2;letter-spacing:0.232px;white-space:pre;-webkit-text-stroke:0.15px currentColor;">BüroWARE® - PREMIUM  5.58.202.43787 (32-bit) /1993-2019 (c) SoftENGINE (Build : 0)</span>
<span style="left:21.00px;top:44.02px;font:bold 13px 'Liberation Sans';line-height:14.95px;color:#fff;letter-spacing:0.062px;white-space:pre;-webkit-text-stroke:0.15px currentColor;">Meine Firma GmbH : 01.2019-12.2019 angemeldet als Systemverwalter (000): [PKBerechtigung aktiv]</span>
<span style="left:1063.00px;top:45.94px;font:12px 'Liberation Sans';line-height:13.80px;color:#fff;letter-spacing:0.476px;white-space:pre;-webkit-text-stroke:0.2px currentColor;">Montag, 11.03.2019 (85.6 MB/766)</span>
<span style="left:1211.00px;top:65.94px;font:12px 'Liberation Sans';line-height:13.80px;color:#fff;letter-spacing:0.566px;white-space:pre;-webkit-text-stroke:0.2px currentColor;">16:47:49</span>
<span style="left:34.00px;top:66.86px;font:11px 'Liberation Sans';line-height:12.65px;color:#fff;letter-spacing:-0.398px;white-space:pre;-webkit-text-stroke:0.2px currentColor;"><u>A</u>llgemein</span>
<span style="left:94.00px;top:66.86px;font:11px 'Liberation Sans';line-height:12.65px;color:#fff;letter-spacing:-0.188px;white-space:pre;-webkit-text-stroke:0.2px currentColor;"><u>O</u>berfläche</span>
<span style="left:162.00px;top:66.86px;font:11px 'Liberation Sans';line-height:12.65px;color:#fff;letter-spacing:-0.131px;white-space:pre;-webkit-text-stroke:0.2px currentColor;"><u>B</u>erechnungen</span>
<span style="left:246.00px;top:66.86px;font:11px 'Liberation Sans';line-height:12.65px;color:#fff;letter-spacing:-0.501px;white-space:pre;-webkit-text-stroke:0.2px currentColor;"><u>F</u>ormulare</span>
<span style="left:309.00px;top:66.86px;font:11px 'Liberation Sans';line-height:12.65px;color:#fff;letter-spacing:-0.045px;white-space:pre;-webkit-text-stroke:0.2px currentColor;"><u>T</u>ools</span>
<span style="left:349.00px;top:66.86px;font:11px 'Liberation Sans';line-height:12.65px;color:#fff;letter-spacing:-0.244px;white-space:pre;-webkit-text-stroke:0.2px currentColor;"><u>E</u>instellungen</span>
<span style="left:428.00px;top:66.86px;font:11px 'Liberation Sans';line-height:12.65px;color:#fff;letter-spacing:-0.735px;white-space:pre;-webkit-text-stroke:0.2px currentColor;">E<u>x</u>tras</span>
<span style="left:473.00px;top:66.86px;font:11px 'Liberation Sans';line-height:12.65px;color:#fff;letter-spacing:-0.837px;white-space:pre;-webkit-text-stroke:0.2px currentColor;"><u>P</u>PS</span>
<span style="left:506.00px;top:66.86px;font:11px 'Liberation Sans';line-height:12.65px;color:#fff;letter-spacing:-0.169px;white-space:pre;-webkit-text-stroke:0.2px currentColor;">A<u>n</u>sicht</span>
<span style="left:556.00px;top:66.86px;font:11px 'Liberation Sans';line-height:12.65px;color:#fff;letter-spacing:-0.438px;white-space:pre;-webkit-text-stroke:0.2px currentColor;"><u>F</u>enster</span>
<span style="left:608.00px;top:66.86px;font:11px 'Liberation Sans';line-height:12.65px;color:#fff;letter-spacing:0.000px;white-space:pre;-webkit-text-stroke:0.2px currentColor;"><u>?</u></span>
<span style="left:45.00px;top:96.86px;font:bold 11px 'Liberation Sans';line-height:12.65px;color:#fff;letter-spacing:-0.221px;white-space:pre;-webkit-text-stroke:0.15px currentColor;">HOME</span>
<span style="left:38.00px;top:123.02px;font:bold 13px 'Liberation Sans';line-height:14.95px;color:#fff;letter-spacing:-0.116px;white-space:pre;-webkit-text-stroke:0.15px currentColor;">CRM/OfficePlaner</span>
<span style="left:41.00px;top:152.02px;font:bold 13px 'Liberation Sans';line-height:14.95px;color:#fff;letter-spacing:0.049px;white-space:pre;-webkit-text-stroke:0.15px currentColor;">Warenwirtschaft</span>
<span style="left:34.00px;top:967.02px;font:bold 13px 'Liberation Sans';line-height:14.95px;color:#fff;letter-spacing:-0.201px;white-space:pre;-webkit-text-stroke:0.15px currentColor;">Finanzbuchhaltung</span>
<span style="left:41.50px;top:186.86px;font:11px 'Liberation Sans';line-height:12.65px;color:#000;letter-spacing:-0.312px;white-space:pre;-webkit-text-stroke:0.2px currentColor;">Basisdaten</span>
<span style="left:41.50px;top:213.86px;font:11px 'Liberation Sans';line-height:12.65px;color:#000;letter-spacing:-0.357px;white-space:pre;-webkit-text-stroke:0.2px currentColor;">Adressstamm</span>
<span style="left:41.50px;top:240.86px;font:11px 'Liberation Sans';line-height:12.65px;color:#000;letter-spacing:0.122px;white-space:pre;-webkit-text-stroke:0.2px currentColor;">Vertreter</span>
<span style="left:41.50px;top:267.86px;font:11px 'Liberation Sans';line-height:12.65px;color:#000;letter-spacing:-0.263px;white-space:pre;-webkit-text-stroke:0.2px currentColor;">Artikelstamm</span>
<span style="left:41.50px;top:294.86px;font:11px 'Liberation Sans';line-height:12.65px;color:#000;letter-spacing:-0.070px;white-space:pre;-webkit-text-stroke:0.2px currentColor;">Adress/Artikel</span>
<span style="left:41.50px;top:321.86px;font:11px 'Liberation Sans';line-height:12.65px;color:#000;letter-spacing:-0.105px;white-space:pre;-webkit-text-stroke:0.2px currentColor;">Projekte</span>
<span style="left:41.50px;top:348.86px;font:11px 'Liberation Sans';line-height:12.65px;color:#000;letter-spacing:-0.147px;white-space:pre;-webkit-text-stroke:0.2px currentColor;">Weitere Stammdaten</span>
<span style="left:41.50px;top:375.86px;font:11px 'Liberation Sans';line-height:12.65px;color:#000;letter-spacing:-0.119px;white-space:pre;-webkit-text-stroke:0.2px currentColor;">Einkauf/Wareneingang</span>
<span style="left:41.50px;top:402.86px;font:11px 'Liberation Sans';line-height:12.65px;color:#000;letter-spacing:-0.049px;white-space:pre;-webkit-text-stroke:0.2px currentColor;">Verkauf/Warenausgang</span>
<span style="left:41.50px;top:429.86px;font:11px 'Liberation Sans';line-height:12.65px;color:#000;letter-spacing:-0.051px;white-space:pre;-webkit-text-stroke:0.2px currentColor;">Lagerverwaltung</span>
<span style="left:40.50px;top:456.86px;font:11px 'Liberation Sans';line-height:12.65px;color:#000;letter-spacing:0.022px;white-space:pre;-webkit-text-stroke:0.2px currentColor;">Informationszentrum</span>
<span style="left:41.50px;top:483.86px;font:11px 'Liberation Sans';line-height:12.65px;color:#000;letter-spacing:-0.138px;white-space:pre;-webkit-text-stroke:0.2px currentColor;">Druckauswertungen</span>
<span style="left:41.50px;top:510.86px;font:11px 'Liberation Sans';line-height:12.65px;color:#000;letter-spacing:-0.394px;white-space:pre;-webkit-text-stroke:0.2px currentColor;">Shopmanager</span>
<span style="left:196.00px;top:96.02px;font:bold 13px 'Liberation Sans';line-height:14.95px;color:#fff;letter-spacing:0.614px;white-space:pre;-webkit-text-stroke:0.15px currentColor;">Vorgelagerte Auswahl Verkauf/Warenausgang &gt; Standard</span>
<span style="left:218.00px;top:126.86px;font:11px 'Liberation Sans';line-height:12.65px;color:#000;letter-spacing:-0.523px;white-space:pre;-webkit-text-stroke:0.2px currentColor;"><u>A</u>llgemein</span>
<span style="left:299.00px;top:126.86px;font:11px 'Liberation Sans';line-height:12.65px;color:#000;letter-spacing:-0.121px;white-space:pre;-webkit-text-stroke:0.2px currentColor;"><u>B</u>earbeiten</span>
<span style="left:382.00px;top:126.86px;font:11px 'Liberation Sans';line-height:12.65px;color:#000;letter-spacing:-0.336px;white-space:pre;-webkit-text-stroke:0.2px currentColor;">A<u>n</u>sicht</span>
<span style="left:447.00px;top:126.86px;font:11px 'Liberation Sans';line-height:12.65px;color:#000;letter-spacing:-0.545px;white-space:pre;-webkit-text-stroke:0.2px currentColor;"><u>T</u>ools</span>
<span style="left:508.00px;top:126.86px;font:11px 'Liberation Sans';line-height:12.65px;color:#000;letter-spacing:-0.135px;white-space:pre;-webkit-text-stroke:0.2px currentColor;">E<u>x</u>tras</span>
<span style="left:569.00px;top:126.86px;font:11px 'Liberation Sans';line-height:12.65px;color:#000;letter-spacing:-0.244px;white-space:pre;-webkit-text-stroke:0.2px currentColor;"><u>E</u>instellungen</span>
<span style="left:670.00px;top:126.86px;font:11px 'Liberation Sans';line-height:12.65px;color:#000;letter-spacing:-0.472px;white-space:pre;-webkit-text-stroke:0.2px currentColor;"><u>H</u>ilfe</span>
<span style="left:199.00px;top:162.86px;font:11px 'Liberation Sans';line-height:12.65px;color:#000;letter-spacing:-0.402px;white-space:pre;-webkit-text-stroke:0.2px currentColor;">1 Belegauswahl</span>
<span style="left:286.00px;top:162.86px;font:11px 'Liberation Sans';line-height:12.65px;color:#000;letter-spacing:-0.285px;white-space:pre;-webkit-text-stroke:0.2px currentColor;"><u>2</u> Selektionspool</span>
<span style="left:201.00px;top:184.86px;font:11px 'Liberation Sans';line-height:12.65px;color:#0f4ec2;letter-spacing:-0.392px;white-space:pre;-webkit-text-stroke:0.2px currentColor;">Selektion</span>
<span style="left:344.00px;top:184.86px;font:11px 'Liberation Sans';line-height:12.65px;color:#0f4ec2;letter-spacing:-0.227px;white-space:pre;-webkit-text-stroke:0.2px currentColor;">Belege</span>
<span style="left:344.00px;top:802.86px;font:11px 'Liberation Sans';line-height:12.65px;color:#0f4ec2;letter-spacing:-0.198px;white-space:pre;-webkit-text-stroke:0.2px currentColor;">Übersicht Positionen</span>
<span style="left:244.00px;top:202.86px;font:11px 'Liberation Sans';line-height:12.65px;color:#000;letter-spacing:-0.140px;white-space:pre;-webkit-text-stroke:0.2px currentColor;">Angebote</span>
<span style="left:244.00px;top:223.86px;font:11px 'Liberation Sans';line-height:12.65px;color:#000;letter-spacing:0.076px;white-space:pre;-webkit-text-stroke:0.2px currentColor;">Aufträge</span>
<span style="left:244.00px;top:244.86px;font:11px 'Liberation Sans';line-height:12.65px;color:#000;letter-spacing:-0.276px;white-space:pre;-webkit-text-stroke:0.2px currentColor;">Lieferscheine</span>
<span style="left:244.00px;top:265.86px;font:11px 'Liberation Sans';line-height:12.65px;color:#000;letter-spacing:-0.363px;white-space:pre;-webkit-text-stroke:0.2px currentColor;">Rechnungen</span>
<span style="left:244.00px;top:286.86px;font:11px 'Liberation Sans';line-height:12.65px;color:#000;letter-spacing:-0.108px;white-space:pre;-webkit-text-stroke:0.2px currentColor;">Gutschriften</span>
<span style="left:244.00px;top:307.86px;font:11px 'Liberation Sans';line-height:12.65px;color:#000;letter-spacing:-0.396px;white-space:pre;-webkit-text-stroke:0.2px currentColor;">Selektionspools</span>
<span style="left:380.00px;top:201.86px;font:11px 'Liberation Sans';line-height:12.65px;color:#000;letter-spacing:-0.238px;white-space:pre;-webkit-text-stroke:0.2px currentColor;">Suche:</span>
<span style="left:421.00px;top:201.86px;font:italic 11px 'Liberation Sans';line-height:12.65px;color:#858585;letter-spacing:-0.219px;white-space:pre;-webkit-text-stroke:0.2px currentColor;">Hier Suchbegriff eingeben (STRG+S)</span>
<span style="left:359.00px;top:222.86px;font:11px 'Liberation Sans';line-height:12.65px;color:#767676;letter-spacing:1.000px;white-space:pre;-webkit-text-stroke:0.2px currentColor;text-shadow:1px 1px 0 #fff;">FI</span>
<span style="left:383.00px;top:222.86px;font:11px 'Liberation Sans';line-height:12.65px;color:#767676;letter-spacing:0.500px;white-space:pre;-webkit-text-stroke:0.2px currentColor;text-shadow:1px 1px 0 #fff;">DR</span>
<span style="left:406.50px;top:222.86px;font:11px 'Liberation Sans';line-height:12.65px;color:#000;letter-spacing:-0.287px;white-space:pre;-webkit-text-stroke:0.2px currentColor;">Beleg-Nr.</span>
<span style="left:479.00px;top:222.86px;font:11px 'Liberation Sans';line-height:12.65px;color:#000;letter-spacing:-0.002px;white-space:pre;-webkit-text-stroke:0.2px currentColor;">Ad.Nr.</span>
<span style="left:550.50px;top:222.86px;font:11px 'Liberation Sans';line-height:12.65px;color:#000;letter-spacing:-0.338px;white-space:pre;-webkit-text-stroke:0.2px currentColor;">Belegdatum</span>
<span style="left:638.30px;top:222.86px;font:11px 'Liberation Sans';line-height:12.65px;color:#000;letter-spacing:0.000px;white-space:pre;-webkit-text-stroke:0.2px currentColor;">Name</span>
<span style="left:814.50px;top:222.86px;font:11px 'Liberation Sans';line-height:12.65px;color:#767676;letter-spacing:0.359px;white-space:pre;-webkit-text-stroke:0.2px currentColor;text-shadow:1px 1px 0 #fff;">Netto €</span>
<span style="left:894.60px;top:222.86px;font:11px 'Liberation Sans';line-height:12.65px;color:#767676;letter-spacing:0.056px;white-space:pre;-webkit-text-stroke:0.2px currentColor;text-shadow:1px 1px 0 #fff;">Mwst €</span>
<span style="left:974.30px;top:222.86px;font:11px 'Liberation Sans';line-height:12.65px;color:#767676;letter-spacing:0.271px;white-space:pre;-webkit-text-stroke:0.2px currentColor;text-shadow:1px 1px 0 #fff;">Brutto €</span>
<span style="left:1054.20px;top:222.86px;font:11px 'Liberation Sans';line-height:12.65px;color:#767676;letter-spacing:0.153px;white-space:pre;-webkit-text-stroke:0.2px currentColor;text-shadow:1px 1px 0 #fff;">Rohertrag €</span>
<span style="left:1134.60px;top:222.86px;font:11px 'Liberation Sans';line-height:12.65px;color:#767676;letter-spacing:-0.227px;white-space:pre;-webkit-text-stroke:0.2px currentColor;text-shadow:1px 1px 0 #fff;">Vorgang</span>
<span style="left:421.18px;top:241.86px;font:11px 'Liberation Sans';line-height:12.65px;color:#000;letter-spacing:0.000px;white-space:pre;-webkit-text-stroke:0.2px currentColor;">20191001</span>
<span style="left:511.03px;top:241.86px;font:11px 'Liberation Sans';line-height:12.65px;color:#000;letter-spacing:0.000px;white-space:pre;-webkit-text-stroke:0.2px currentColor;">10003</span>
<span style="left:551.00px;top:241.86px;font:11px 'Liberation Sans';line-height:12.65px;color:#000;letter-spacing:-0.008px;white-space:pre;-webkit-text-stroke:0.2px currentColor;">08.01.2019 /Di</span>
<span style="left:638.50px;top:241.86px;font:11px 'Liberation Sans';line-height:12.65px;color:#000;letter-spacing:-0.219px;white-space:pre;-webkit-text-stroke:0.2px currentColor;">Kunde EU-Ausland mit Rabatt</span>
<span style="left:851.97px;top:241.86px;font:11px 'Liberation Sans';line-height:12.65px;color:#000;letter-spacing:0.000px;white-space:pre;-webkit-text-stroke:0.2px currentColor;">587,88</span>
<span style="left:1011.47px;top:241.86px;font:11px 'Liberation Sans';line-height:12.65px;color:#000;letter-spacing:0.000px;white-space:pre;-webkit-text-stroke:0.2px currentColor;">587,88</span>
<span style="left:1092.17px;top:241.86px;font:11px 'Liberation Sans';line-height:12.65px;color:#000;letter-spacing:0.000px;white-space:pre;-webkit-text-stroke:0.2px currentColor;">125,03</span>
<span style="left:1179.06px;top:241.86px;font:11px 'Liberation Sans';line-height:12.65px;color:#000;letter-spacing:0.000px;white-space:pre;-webkit-text-stroke:0.2px currentColor;">176</span>
<span style="left:421.18px;top:260.86px;font:11px 'Liberation Sans';line-height:12.65px;color:#000;letter-spacing:0.000px;white-space:pre;-webkit-text-stroke:0.2px currentColor;">20191002</span>
<span style="left:511.03px;top:260.86px;font:11px 'Liberation Sans';line-height:12.65px;color:#000;letter-spacing:0.000px;white-space:pre;-webkit-text-stroke:0.2px currentColor;">10004</span>
<span style="left:551.00px;top:260.86px;font:11px 'Liberation Sans';line-height:12.65px;color:#000;letter-spacing:-0.008px;white-space:pre;-webkit-text-stroke:0.2px currentColor;">08.01.2019 /Di</span>
<span style="left:638.50px;top:260.86px;font:11px 'Liberation Sans';line-height:12.65px;color:#000;letter-spacing:0.020px;white-space:pre;-webkit-text-stroke:0.2px currentColor;width:170px;overflow:hidden;">Kunde EU-Ausland mit Zahlungskondition</span>
<span style="left:851.97px;top:260.86px;font:11px 'Liberation Sans';line-height:12.65px;color:#000;letter-spacing:0.000px;white-space:pre;-webkit-text-stroke:0.2px currentColor;">435,22</span>
<span style="left:1011.47px;top:260.86px;font:11px 'Liberation Sans';line-height:12.65px;color:#000;letter-spacing:0.000px;white-space:pre;-webkit-text-stroke:0.2px currentColor;">435,22</span>
<span style="left:1092.17px;top:260.86px;font:11px 'Liberation Sans';line-height:12.65px;color:#000;letter-spacing:0.000px;white-space:pre;-webkit-text-stroke:0.2px currentColor;">198,76</span>
<span style="left:1179.06px;top:260.86px;font:11px 'Liberation Sans';line-height:12.65px;color:#000;letter-spacing:0.000px;white-space:pre;-webkit-text-stroke:0.2px currentColor;">177</span>
<span style="left:421.18px;top:279.86px;font:11px 'Liberation Sans';line-height:12.65px;color:#fff;letter-spacing:0.000px;white-space:pre;-webkit-text-stroke:0.2px currentColor;">20191003</span>
<span style="left:511.03px;top:279.86px;font:11px 'Liberation Sans';line-height:12.65px;color:#fff;letter-spacing:0.000px;white-space:pre;-webkit-text-stroke:0.2px currentColor;">10006</span>
<span style="left:551.00px;top:279.86px;font:11px 'Liberation Sans';line-height:12.65px;color:#fff;letter-spacing:0.085px;white-space:pre;-webkit-text-stroke:0.2px currentColor;">08.01.2019</span>
<span style="left:638.50px;top:279.86px;font:11px 'Liberation Sans';line-height:12.65px;color:#fff;letter-spacing:-0.058px;white-space:pre;-webkit-text-stroke:0.2px currentColor;">Kunde Drittland mit Rabatt</span>
<span style="left:845.86px;top:279.86px;font:11px 'Liberation Sans';line-height:12.65px;color:#fff;letter-spacing:0.000px;white-space:pre;-webkit-text-stroke:0.2px currentColor;">1058,84</span>
<span style="left:1005.36px;top:279.86px;font:11px 'Liberation Sans';line-height:12.65px;color:#fff;letter-spacing:0.000px;white-space:pre;-webkit-text-stroke:0.2px currentColor;">1058,84</span>
<span style="left:1094.63px;top:279.86px;font:11px 'Liberation Sans';line-height:12.65px;color:#fff;letter-spacing:0.000px;white-space:pre;-webkit-text-stroke:0.2px currentColor;">-61,16</span>
<span style="left:1179.06px;top:279.86px;font:11px 'Liberation Sans';line-height:12.65px;color:#fff;letter-spacing:0.000px;white-space:pre;-webkit-text-stroke:0.2px currentColor;">178</span>
<span style="left:421.18px;top:298.86px;font:11px 'Liberation Sans';line-height:12.65px;color:#000;letter-spacing:0.000px;white-space:pre;-webkit-text-stroke:0.2px currentColor;">20191004</span>
<span style="left:511.03px;top:298.86px;font:11px 'Liberation Sans';line-height:12.65px;color:#000;letter-spacing:0.000px;white-space:pre;-webkit-text-stroke:0.2px currentColor;">10001</span>
<span style="left:551.00px;top:298.86px;font:11px 'Liberation Sans';line-height:12.65px;color:#000;letter-spacing:-0.179px;white-space:pre;-webkit-text-stroke:0.2px currentColor;">13.02.2019 /Mi</span>
<span style="left:638.50px;top:298.86px;font:11px 'Liberation Sans';line-height:12.65px;color:#000;letter-spacing:-0.202px;white-space:pre;-webkit-text-stroke:0.2px currentColor;">Kunde Inland</span>
<span style="left:851.97px;top:298.86px;font:11px 'Liberation Sans';line-height:12.65px;color:#000;letter-spacing:0.000px;white-space:pre;-webkit-text-stroke:0.2px currentColor;">652,59</span>
<span style="left:931.47px;top:298.86px;font:11px 'Liberation Sans';line-height:12.65px;color:#000;letter-spacing:0.000px;white-space:pre;-webkit-text-stroke:0.2px currentColor;">123,99</span>
<span style="left:1011.47px;top:298.86px;font:11px 'Liberation Sans';line-height:12.65px;color:#000;letter-spacing:0.000px;white-space:pre;-webkit-text-stroke:0.2px currentColor;">776,58</span>
<span style="left:1092.17px;top:298.86px;font:11px 'Liberation Sans';line-height:12.65px;color:#000;letter-spacing:0.000px;white-space:pre;-webkit-text-stroke:0.2px currentColor;">338,20</span>
<span style="left:1179.06px;top:298.86px;font:11px 'Liberation Sans';line-height:12.65px;color:#000;letter-spacing:0.000px;white-space:pre;-webkit-text-stroke:0.2px currentColor;">174</span>
<span style="left:421.18px;top:317.86px;font:11px 'Liberation Sans';line-height:12.65px;color:#000;letter-spacing:0.000px;white-space:pre;-webkit-text-stroke:0.2px currentColor;">20191007</span>
<span style="left:511.03px;top:317.86px;font:11px 'Liberation Sans';line-height:12.65px;color:#000;letter-spacing:0.000px;white-space:pre;-webkit-text-stroke:0.2px currentColor;">10000</span>
<span style="left:551.00px;top:317.86px;font:11px 'Liberation Sans';line-height:12.65px;color:#000;letter-spacing:0.037px;white-space:pre;-webkit-text-stroke:0.2px currentColor;">11.03.2019 /Mo</span>
<span style="left:638.50px;top:317.86px;font:11px 'Liberation Sans';line-height:12.65px;color:#000;letter-spacing:-0.205px;white-space:pre;-webkit-text-stroke:0.2px currentColor;">Kunde Inland mit Zahlungskondition</span>
<span style="left:858.09px;top:317.86px;font:11px 'Liberation Sans';line-height:12.65px;color:#000;letter-spacing:0.000px;white-space:pre;-webkit-text-stroke:0.2px currentColor;">72,22</span>
<span style="left:937.59px;top:317.86px;font:11px 'Liberation Sans';line-height:12.65px;color:#000;letter-spacing:0.000px;white-space:pre;-webkit-text-stroke:0.2px currentColor;">13,72</span>
<span style="left:1017.59px;top:317.86px;font:11px 'Liberation Sans';line-height:12.65px;color:#000;letter-spacing:0.000px;white-space:pre;-webkit-text-stroke:0.2px currentColor;">85,94</span>
<span style="left:1098.29px;top:317.86px;font:11px 'Liberation Sans';line-height:12.65px;color:#000;letter-spacing:0.000px;white-space:pre;-webkit-text-stroke:0.2px currentColor;">17,68</span>
<span style="left:1179.06px;top:317.86px;font:11px 'Liberation Sans';line-height:12.65px;color:#000;letter-spacing:0.000px;white-space:pre;-webkit-text-stroke:0.2px currentColor;">193</span>
<span style="left:359.00px;top:831.86px;font:11px 'Liberation Sans';line-height:12.65px;color:#767676;letter-spacing:0.000px;white-space:pre;-webkit-text-stroke:0.2px currentColor;text-shadow:1px 1px 0 #fff;">S</span>
<span style="left:375.00px;top:831.86px;font:11px 'Liberation Sans';line-height:12.65px;color:#767676;letter-spacing:-0.353px;white-space:pre;-webkit-text-stroke:0.2px currentColor;text-shadow:1px 1px 0 #fff;">Artikelnummer</span>
<span style="left:486.50px;top:831.86px;font:11px 'Liberation Sans';line-height:12.65px;color:#767676;letter-spacing:0.994px;white-space:pre;-webkit-text-stroke:0.2px currentColor;text-shadow:1px 1px 0 #fff;">Text</span>
<span style="left:726.00px;top:831.86px;font:11px 'Liberation Sans';line-height:12.65px;color:#767676;letter-spacing:-0.329px;white-space:pre;-webkit-text-stroke:0.2px currentColor;text-shadow:1px 1px 0 #fff;">Menge</span>
<span style="left:798.30px;top:831.86px;font:11px 'Liberation Sans';line-height:12.65px;color:#767676;letter-spacing:-0.117px;white-space:pre;-webkit-text-stroke:0.2px currentColor;text-shadow:1px 1px 0 #fff;">Mengeneinheit</span>
<span style="left:886.30px;top:831.86px;font:11px 'Liberation Sans';line-height:12.65px;color:#767676;letter-spacing:0.366px;white-space:pre;-webkit-text-stroke:0.2px currentColor;text-shadow:1px 1px 0 #fff;">Rab.%</span>
<span style="left:934.00px;top:831.86px;font:11px 'Liberation Sans';line-height:12.65px;color:#767676;letter-spacing:-0.081px;white-space:pre;-webkit-text-stroke:0.2px currentColor;text-shadow:1px 1px 0 #fff;">Gesamt €</span>
<span style="left:1006.20px;top:831.86px;font:11px 'Liberation Sans';line-height:12.65px;color:#767676;letter-spacing:0.183px;white-space:pre;-webkit-text-stroke:0.2px currentColor;text-shadow:1px 1px 0 #fff;">Rohertrag €</span>
<span style="left:357.00px;top:850.86px;font:11px 'Liberation Sans';line-height:12.65px;color:#000;letter-spacing:0.000px;white-space:pre;-webkit-text-stroke:0.2px currentColor;">0</span>
<span style="left:373.00px;top:850.86px;font:11px 'Liberation Sans';line-height:12.65px;color:#000;letter-spacing:-0.082px;white-space:pre;-webkit-text-stroke:0.2px currentColor;">Artikel_mit_Varianten.</span>
<span style="left:485.00px;top:850.86px;font:11px 'Liberation Sans';line-height:12.65px;color:#000;letter-spacing:-0.079px;white-space:pre;-webkit-text-stroke:0.2px currentColor;">Artikel mit Varianten - M - Rot</span>
<span style="left:783.20px;top:850.86px;font:11px 'Liberation Sans';line-height:12.65px;color:#000;letter-spacing:0.000px;white-space:pre;-webkit-text-stroke:0.2px currentColor;">1</span>
<span style="left:796.50px;top:850.86px;font:11px 'Liberation Sans';line-height:12.65px;color:#000;letter-spacing:-0.300px;white-space:pre;-webkit-text-stroke:0.2px currentColor;">STCK</span>
<span style="left:897.39px;top:850.86px;font:11px 'Liberation Sans';line-height:12.65px;color:#000;letter-spacing:0.000px;white-space:pre;-webkit-text-stroke:0.2px currentColor;">10,00</span>
<span style="left:963.87px;top:850.86px;font:11px 'Liberation Sans';line-height:12.65px;color:#000;letter-spacing:0.000px;white-space:pre;-webkit-text-stroke:0.2px currentColor;">264,71</span>
<span style="left:1054.00px;top:850.86px;font:11px 'Liberation Sans';line-height:12.65px;color:#f40010;letter-spacing:-0.014px;white-space:pre;-webkit-text-stroke:0.2px currentColor;">-15,29</span>
<span style="left:357.00px;top:869.86px;font:11px 'Liberation Sans';line-height:12.65px;color:#000;letter-spacing:0.000px;white-space:pre;-webkit-text-stroke:0.2px currentColor;">0</span>
<span style="left:373.00px;top:869.86px;font:11px 'Liberation Sans';line-height:12.65px;color:#000;letter-spacing:-0.082px;white-space:pre;-webkit-text-stroke:0.2px currentColor;">Artikel_mit_Varianten.</span>
<span style="left:485.00px;top:869.86px;font:11px 'Liberation Sans';line-height:12.65px;color:#000;letter-spacing:-0.152px;white-space:pre;-webkit-text-stroke:0.2px currentColor;">Artikel mit Varianten - M - Blau</span>
<span style="left:783.20px;top:869.86px;font:11px 'Liberation Sans';line-height:12.65px;color:#000;letter-spacing:0.000px;white-space:pre;-webkit-text-stroke:0.2px currentColor;">1</span>
<span style="left:796.50px;top:869.86px;font:11px 'Liberation Sans';line-height:12.65px;color:#000;letter-spacing:-0.300px;white-space:pre;-webkit-text-stroke:0.2px currentColor;">STCK</span>
<span style="left:897.39px;top:869.86px;font:11px 'Liberation Sans';line-height:12.65px;color:#000;letter-spacing:0.000px;white-space:pre;-webkit-text-stroke:0.2px currentColor;">10,00</span>
<span style="left:963.87px;top:869.86px;font:11px 'Liberation Sans';line-height:12.65px;color:#000;letter-spacing:0.000px;white-space:pre;-webkit-text-stroke:0.2px currentColor;">264,71</span>
<span style="left:1054.00px;top:869.86px;font:11px 'Liberation Sans';line-height:12.65px;color:#f40010;letter-spacing:-0.014px;white-space:pre;-webkit-text-stroke:0.2px currentColor;">-15,29</span>
<span style="left:357.00px;top:888.86px;font:11px 'Liberation Sans';line-height:12.65px;color:#000;letter-spacing:0.000px;white-space:pre;-webkit-text-stroke:0.2px currentColor;">0</span>
<span style="left:373.00px;top:888.86px;font:11px 'Liberation Sans';line-height:12.65px;color:#000;letter-spacing:-0.082px;white-space:pre;-webkit-text-stroke:0.2px currentColor;">Artikel_mit_Varianten.</span>
<span style="left:485.00px;top:888.86px;font:11px 'Liberation Sans';line-height:12.65px;color:#000;letter-spacing:-0.122px;white-space:pre;-webkit-text-stroke:0.2px currentColor;">Artikel mit Varianten - XL - Rot</span>
<span style="left:783.20px;top:888.86px;font:11px 'Liberation Sans';line-height:12.65px;color:#000;letter-spacing:0.000px;white-space:pre;-webkit-text-stroke:0.2px currentColor;">1</span>
<span style="left:796.50px;top:888.86px;font:11px 'Liberation Sans';line-height:12.65px;color:#000;letter-spacing:-0.300px;white-space:pre;-webkit-text-stroke:0.2px currentColor;">STCK</span>
<span style="left:897.39px;top:888.86px;font:11px 'Liberation Sans';line-height:12.65px;color:#000;letter-spacing:0.000px;white-space:pre;-webkit-text-stroke:0.2px currentColor;">10,00</span>
<span style="left:963.87px;top:888.86px;font:11px 'Liberation Sans';line-height:12.65px;color:#000;letter-spacing:0.000px;white-space:pre;-webkit-text-stroke:0.2px currentColor;">264,71</span>
<span style="left:1054.00px;top:888.86px;font:11px 'Liberation Sans';line-height:12.65px;color:#f40010;letter-spacing:-0.014px;white-space:pre;-webkit-text-stroke:0.2px currentColor;">-15,29</span>
<span style="left:357.00px;top:907.86px;font:11px 'Liberation Sans';line-height:12.65px;color:#000;letter-spacing:0.000px;white-space:pre;-webkit-text-stroke:0.2px currentColor;">0</span>
<span style="left:373.00px;top:907.86px;font:11px 'Liberation Sans';line-height:12.65px;color:#000;letter-spacing:-0.082px;white-space:pre;-webkit-text-stroke:0.2px currentColor;">Artikel_mit_Varianten.</span>
<span style="left:485.00px;top:907.86px;font:11px 'Liberation Sans';line-height:12.65px;color:#000;letter-spacing:-0.191px;white-space:pre;-webkit-text-stroke:0.2px currentColor;">Artikel mit Varianten - XL - Blau</span>
<span style="left:783.20px;top:907.86px;font:11px 'Liberation Sans';line-height:12.65px;color:#000;letter-spacing:0.000px;white-space:pre;-webkit-text-stroke:0.2px currentColor;">1</span>
<span style="left:796.50px;top:907.86px;font:11px 'Liberation Sans';line-height:12.65px;color:#000;letter-spacing:-0.300px;white-space:pre;-webkit-text-stroke:0.2px currentColor;">STCK</span>
<span style="left:897.39px;top:907.86px;font:11px 'Liberation Sans';line-height:12.65px;color:#000;letter-spacing:0.000px;white-space:pre;-webkit-text-stroke:0.2px currentColor;">10,00</span>
<span style="left:963.87px;top:907.86px;font:11px 'Liberation Sans';line-height:12.65px;color:#000;letter-spacing:0.000px;white-space:pre;-webkit-text-stroke:0.2px currentColor;">264,71</span>
<span style="left:1054.00px;top:907.86px;font:11px 'Liberation Sans';line-height:12.65px;color:#f40010;letter-spacing:-0.014px;white-space:pre;-webkit-text-stroke:0.2px currentColor;">-15,29</span>
<span style="left:21.00px;top:994.86px;font:11px 'Liberation Sans';line-height:12.65px;color:#fff;letter-spacing:-0.464px;white-space:pre;-webkit-text-stroke:0.2px currentColor;">13 Elemente</span>
<span style="left:190.30px;top:994.86px;font:11px 'Liberation Sans';line-height:12.65px;color:#fff;letter-spacing:-0.059px;white-space:pre;-webkit-text-stroke:0.2px currentColor;">Kunde Drittland mit Rabatt/10006</span>
</body></html>
